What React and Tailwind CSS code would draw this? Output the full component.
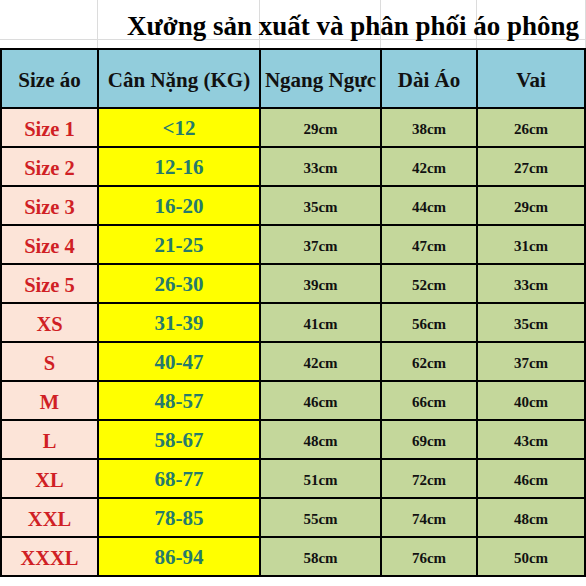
import React from "react";

const rows = [
  ["Size 1", "<12", "29cm", "38cm", "26cm"],
  ["Size 2", "12-16", "33cm", "42cm", "27cm"],
  ["Size 3", "16-20", "35cm", "44cm", "29cm"],
  ["Size 4", "21-25", "37cm", "47cm", "31cm"],
  ["Size 5", "26-30", "39cm", "52cm", "33cm"],
  ["XS", "31-39", "41cm", "56cm", "35cm"],
  ["S", "40-47", "42cm", "62cm", "37cm"],
  ["M", "48-57", "46cm", "66cm", "40cm"],
  ["L", "58-67", "48cm", "69cm", "43cm"],
  ["XL", "68-77", "51cm", "72cm", "46cm"],
  ["XXL", "78-85", "55cm", "74cm", "48cm"],
  ["XXXL", "86-94", "58cm", "76cm", "50cm"],
];

const headers = ["Size áo", "Cân Nặng (KG)", "Ngang Ngực", "Dài Áo", "Vai"];

const App = () => (
  <div className="w-[586px] h-[586px] bg-white overflow-hidden font-['Liberation_Serif',serif] font-bold">
    {/* sheet gridlines behind the title */}
    <div className="relative h-[48px]">
      <div className="grid grid-cols-[98px_162px_121px_96px_109px] h-full">
        {[0, 1, 2, 3, 4].map((i) => (
          <div key={i} className="border-r border-[#dcdcdc] grid grid-rows-[40px_8px]">
            <div className="border-b border-[#dcdcdc]" />
            <div />
          </div>
        ))}
      </div>
      <div className="absolute left-[127px] top-[13px] text-[27px] leading-none text-black whitespace-nowrap">
        Xưởng sản xuất và phân phối áo phông
      </div>
    </div>

    <div className="grid grid-cols-[95px_160px_119px_94px_106px] grid-rows-[57px_repeat(12,37px)] gap-[2px] p-[2px] bg-black w-[586px]">
      {headers.map((h) => (
        <div key={h} className="bg-[#92cddc] flex items-center justify-center pt-[4px] text-[21px] text-[#111] whitespace-nowrap">
          {h}
        </div>
      ))}
      {rows.map((r) => (
        <React.Fragment key={r[0]}>
          <div className="bg-[#fce4d8] flex items-center justify-center pt-[3px] text-[20.5px] text-[#d01f25]">{r[0]}</div>
          <div className="bg-[#ffff00] flex items-center justify-center pt-[3px] text-[21px] text-[#267a6c]">{r[1]}</div>
          <div className="bg-[#c4d79b] flex items-center justify-center pt-[3px] text-[15px] text-[#111]">{r[2]}</div>
          <div className="bg-[#c4d79b] flex items-center justify-center pt-[3px] text-[15px] text-[#111]">{r[3]}</div>
          <div className="bg-[#c4d79b] flex items-center justify-center pt-[3px] text-[15px] text-[#111]">{r[4]}</div>
        </React.Fragment>
      ))}
    </div>
  </div>
);

export default App;
